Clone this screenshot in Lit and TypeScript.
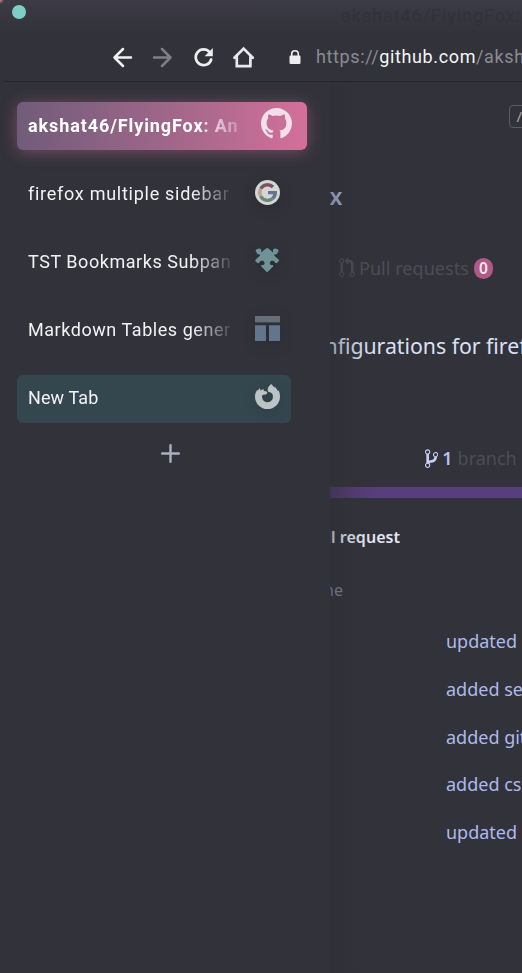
import { LitElement, html, css, svg } from "lit";
import { customElement, property } from "lit/decorators.js";
import { classMap } from "lit/directives/class-map.js";
import { styleMap } from "lit/directives/style-map.js";

const githubMark = svg`<svg viewBox="0 0 16 16" width="31" height="31"><path fill="#f3dfe9" d="M8 0C3.58 0 0 3.58 0 8c0 3.54 2.29 6.53 5.47 7.59.4.07.55-.17.55-.38 0-.19-.01-.82-.01-1.49-2.01.37-2.53-.49-2.69-.94-.09-.23-.48-.94-.82-1.13-.28-.15-.68-.52-.01-.53.63-.01 1.08.58 1.23.82.72 1.21 1.87.87 2.33.66.07-.52.28-.87.51-1.07-1.78-.2-3.64-.89-3.64-3.95 0-.87.31-1.59.82-2.15-.08-.2-.36-1.02.08-2.12 0 0 .67-.21 2.2.82.64-.18 1.32-.27 2-.27s1.36.09 2 .27c1.53-1.04 2.2-.82 2.2-.82.44 1.1.16 1.92.08 2.12.51.56.82 1.27.82 2.15 0 3.07-1.87 3.75-3.65 3.95.29.25.54.73.54 1.48 0 1.07-.01 1.93-.01 2.2 0 .21.15.46.55.38A8.01 8.01 0 0 0 16 8c0-4.42-3.58-8-8-8z"/></svg>`;

const googleMark = svg`<svg viewBox="0 0 25 25" width="25" height="25"><circle cx="12.5" cy="12.5" r="12.5" fill="#d3d5d7"/><g fill="none" stroke-width="3.4"><path stroke="#7a5558" d="M5.7 8.8A7.8 7.8 0 0 1 18 7"/><path stroke="#b9a886" d="M5.7 8.8a7.8 7.8 0 0 0 0 7.4"/><path stroke="#6b8576" d="M5.7 16.2a7.8 7.8 0 0 0 11.9 2.3"/><path stroke="#64748f" d="M17.6 18.5a7.8 7.8 0 0 0 2.7-5.9H13"/></g></svg>`;

const puzzle = svg`<svg viewBox="0 0 25 25" width="25" height="25"><path fill="#6f9396" d="M12.2 0C13.2 0 16.4 3 17.4 4C18.4 4.7 18.1 3.7 17.9 2.8C17.8.8 20.2 0 21.4 1.1C23.6.8 24.2 3.6 22.7 4.3C22.7 6.2 20.8 6.6 19.8 6.5C18.7 6.7 19 7.4 19.7 8L23.8 11.8Q24.2 12.6 23.6 13.4L21.8 15C20.9 15.5 20.3 15.1 19.7 14.1C18.6 12.2 16 12.2 15.1 13.9C14.2 15.6 15.2 17.1 17 17C18.4 17 18.6 18 17.9 18.8L12.8 23.7Q12.2 24.2 11.5 23.7L6.5 18.8C5.8 18 6.2 17 7.6 17C9.2 17.1 10.1 15.6 9.2 13.9C8.2 12.2 5.7 12.2 4.6 14.1C4.1 15.1 3.4 15.5 2.5 15L.7 13.4Q.1 12.6.5 11.8L4.6 8C5.3 7.4 5.5 6.7 4.4 6.5C3.4 6.6 1.6 6.2 1.6 4.3C0 3.6.7.8 2.9 1.1C4.1 0 6.4.8 6.4 2.8C6.2 3.7 5.9 4.7 6.9 4C7.9 3 11.2 0 12.2 0Z"/></svg>`;

const tableMark = svg`<svg viewBox="0 0 25 25" width="25" height="25"><path fill="#666e78" d="M0 0h25v6.4H0z"/><path fill="#62758c" d="M0 9.2h11V25H0zM14 9.2h11V25H14z"/></svg>`;

const foxMark = svg`<svg viewBox="0 0 25 25" width="25" height="25"><path fill="#bcc2c6" d="M16.2 0L19.2 3.2L20.1 3.1C21.1 4.4 22.1 5.3 22.6 6.8L23.7 6.6C24.5 8.6 25 10.4 25 12.7A12.5 12.3 0 0 1 0 12.7C0 9.8.8 7.8 2.2 6L2.9 6.6L4.8 3.9L5.6 6.5L8.3 5L9 7.1L11.8 7.4L12.4 9L10.8 10.4L8.2 10.7C7 11 6.8 12.2 7.1 13.4A5.4 5.2 0 0 0 17.9 12.7C18 10.8 17.3 9.6 16.2 8.8L13.3 7.8C11.6 5 13.8 2 16.2 0Z"/></svg>`;

@customElement("side-tab")
class SideTab extends LitElement {
  @property() label = "";
  @property({ type: Number }) spacing = 0.5;
  @property({ type: Boolean }) active = false;
  @property({ type: Boolean }) fresh = false;
  @property({ attribute: false }) icon: unknown = null;

  static styles = css`
    :host { display: block; }
    .tab {
      box-sizing: border-box; width: 274px; height: 48px; border-radius: 6px;
      padding: 0 11px 0 11px; display: flex; align-items: center; justify-content: space-between;
      color: #f2f2f4; font: 400 18px/24px Roboto, "Liberation Sans", sans-serif;
    }
    .label {
      width: 206px; overflow: hidden; white-space: nowrap;
      -webkit-mask-image: linear-gradient(90deg, #000 164px, transparent 208px);
      mask-image: linear-gradient(90deg, #000 164px, transparent 208px);
    }
    .icon { display: flex; margin-bottom: 3px; filter: drop-shadow(1px 3px 7px rgba(0, 0, 0, .16)); }
    .active {
      width: 290px; padding-right: 15px; color: #fff; font-weight: 700;
      background: linear-gradient(90deg, #705c79, #a2678a 55%, #d3709b);
      box-shadow: 0 2px 16px rgba(211, 112, 155, .42);
    }
    .active .label {
      width: 215px;
      -webkit-mask-image: linear-gradient(90deg, #000 170px, transparent 222px);
      mask-image: linear-gradient(90deg, #000 170px, transparent 222px);
    }
    .active .icon { margin-bottom: 5px; filter: none; }
    .fresh { background: #34474f; margin-top: 1px; padding-bottom: 2px; }
  `;

  render() {
    return html`<div class=${classMap({ tab: true, active: this.active, fresh: this.fresh })}>
      <span class="label" style=${styleMap({ letterSpacing: `${this.spacing}px` })}>${this.label}</span><span class="icon">${this.icon}</span>
    </div>`;
  }
}

@customElement("app-root")
class AppRoot extends LitElement {
  static styles = css`
    :host {
      display: flex; flex-direction: column; width: 522px; height: 973px; overflow: hidden;
      background: #32323a; font-family: "Noto Sans", sans-serif; white-space: nowrap;
    }
    .chrome {
      height: 82px; flex: none; box-sizing: border-box; display: flex; flex-direction: column;
      background: radial-gradient(circle at 0 0, #b5737d 0, #b5737d 1px, transparent 4px), linear-gradient(#3c3b46, #32323a 34px);
    }
    .titlebar { height: 32px; display: flex; align-items: flex-start; }
    .dot { width: 14px; height: 14px; border-radius: 50%; background: #7dcfc6; margin: 5px 0 0 12px; }
    .title { margin: 4px 0 0 315px; font: 18px/24px Roboto, sans-serif; letter-spacing: .95px; color: #31313a; }
    .nav { height: 49px; display: flex; align-items: center; margin-left: 4px; border-bottom: 1px solid #25252b; }
    .nav svg { display: block; flex: none; }
    .back { margin-left: 107px; }
    .forward { margin-left: 16px; opacity: .4; }
    .reload { margin-left: 17px; }
    .home { margin-left: 16px; }
    .lock { margin-left: 33px; }
    .url { margin-left: 15px; font: 18px/24px Roboto, sans-serif; letter-spacing: .62px; color: #8b8b91; }
    .url b { font-weight: 400; color: #f5f5f7; }
    .body { flex: 1; display: flex; min-height: 0; }
    .sidebar { width: 330px; flex: none; box-sizing: border-box; padding: 20px 0 0 17px; display: flex; flex-direction: column; overflow: hidden; }
    .tabs { display: flex; flex-direction: column; gap: 20px; }
    .plus { margin: 21px 0 0 144px; width: 19px; height: 19px; display: block; }
    .page { flex: 1; min-width: 0; overflow: hidden; position: relative; display: flex; flex-direction: column; }
    .page::after {
      content: ""; position: absolute; inset: 0 auto 0 0; width: 46px;
      background: linear-gradient(90deg, rgba(44, 44, 50, .36), rgba(46, 46, 52, .14) 45%, transparent);
    }
    .row { height: 30px; flex: none; display: flex; align-items: center; line-height: 30px; }
    .key { box-sizing: border-box; flex: none; width: 40px; height: 23px; margin: 23px 0 0 178.5px; border: 1px solid #5b5b62; border-radius: 4px; padding-left: 7px; font-size: 15px; line-height: 21px; color: #a5a5aa; }
    .cut { justify-content: flex-end; overflow: hidden; }
    .repo { margin-top: 53px; width: 12.5px; font-size: 23px; font-weight: 600; color: #b0bbe4; }
    .pulls { margin-top: 42px; padding-left: 8.5px; font-size: 18px; color: #4c4c58; }
    .pulls svg { margin-right: 4.5px; }
    .pulls span { letter-spacing: .05px; }
    .pulls .count { margin-left: 5px; width: 19px; height: 21px; border-radius: 10px; background: #b15885; color: #f4e8f2; font-size: 15.5px; font-weight: 600; line-height: 21px; text-align: center; }
    .about { margin-top: 48px; font-size: 21.3px; color: #d9e0f5; }
    .about span { margin-left: -5.5px; letter-spacing: -.03px; }
    .branch { margin-top: 82px; padding-left: 94.5px; font-size: 18px; color: #4c4c58; }
    .branch svg { margin-top: 2px; }
    .branch b { margin: 0 5px 0 4.5px; font-weight: 600; color: #b3c1f5; }
    .bar { height: 11px; flex: none; margin-top: 14px; background: linear-gradient(90deg, #4d3a68, #573e7c 34px); }
    .request { margin-top: 24px; width: 70px; font-size: 16px; font-weight: 600; color: #e4e8f6; }
    .request span { letter-spacing: .04px; }
    .name { margin-top: 23px; width: 13px; font-size: 16px; color: #8286a5; }
    .commits { margin: 21px 0 0 116px; display: flex; flex-direction: column; gap: 17.75px; font-size: 18px; color: #adb9ee; }
  `;

  private tabs = [
    { label: "akshat46/FlyingFox: An", icon: githubMark, spacing: 0.9, active: true, fresh: false },
    { label: "firefox multiple sidebar", icon: googleMark, spacing: 0.73, active: false, fresh: false },
    { label: "TST Bookmarks Subpan", icon: puzzle, spacing: 0.55, active: false, fresh: false },
    { label: "Markdown Tables gener", icon: tableMark, spacing: 0.55, active: false, fresh: false },
    { label: "New Tab", icon: foxMark, spacing: 0.1, active: false, fresh: true },
  ];

  private commits = ["updated", "added se", "added git", "added css", "updated"];

  render() {
    return html`
      <header class="chrome">
        <div class="titlebar"><span class="dot"></span><span class="title">akshat46/FlyingFox:</span></div>
        <nav class="nav">
          <svg class="back" width="24" height="24" viewBox="0 0 24 24" fill="none" stroke="#f1f1f3" stroke-width="2.5" stroke-linecap="round" stroke-linejoin="round"><path d="M20 12.5H4M12 4L3.5 12.5L12 21"/></svg>
          <svg class="forward" width="24" height="24" viewBox="0 0 24 24" fill="none" stroke="#f1f1f3" stroke-width="2.5" stroke-linecap="round" stroke-linejoin="round"><path d="M3 12.5H19M11 4L19.5 12.5L11 21"/></svg>
          <svg class="reload" width="24" height="24" viewBox="0 0 24 24"><path d="M17.7 7.2A7.9 7.9 0 1 0 19.2 14.5" fill="none" stroke="#ededf0" stroke-width="2.7" stroke-linecap="round"/><path d="M20.8 3v8.2h-8.2z" fill="#ededf0"/></svg>
          <svg class="home" width="24" height="24" viewBox="0 0 24 24" fill="none" stroke="#e9e9ed" stroke-width="2.7" stroke-linecap="round" stroke-linejoin="miter"><path d="M2.4 12.8L11.6 3.6L20.8 12.8M4.8 11.5V21.2H18.4V11.5"/></svg>
          <svg class="lock" width="12" height="16" viewBox="0 0 12 16"><path d="M2.7 8V5a3.3 3.3 0 0 1 6.6 0v3" fill="none" stroke="#ededf0" stroke-width="1.6"/><rect x=".5" y="6.5" width="11" height="8.5" rx="1.2" fill="#ededf0"/></svg>
          <span class="url">https://<b>github.com</b>/aksh</span>
        </nav>
      </header>
      <div class="body">
        <aside class="sidebar">
          <div class="tabs">
            ${this.tabs.map((t) => html`<side-tab .label=${t.label} .spacing=${t.spacing} .icon=${t.icon} .active=${t.active} .fresh=${t.fresh}></side-tab>`)}
          </div>
          <svg class="plus" viewBox="0 0 19 19" stroke="#abafc0" stroke-width="2.4" stroke-linecap="round"><path d="M9.5 1.2v16.6M1.2 9.5h16.6"/></svg>
        </aside>
        <main class="page">
          <div class="key">/</div>
          <div class="row cut repo">x</div>
          <div class="row pulls">
            <svg width="16" height="21.3" viewBox="0 0 12 16" fill="#4c4c58"><path d="M11 11.28V5c-.03-.78-.34-1.47-.94-2.06C9.46 2.35 8.78 2.03 8 2H7V0L4 3l3 3V4h1c.27.02.48.11.69.31.21.2.3.42.31.69v6.28A1.993 1.993 0 0 0 10 15a1.993 1.993 0 0 0 1-3.72zm-1 2.92c-.66 0-1.2-.55-1.2-1.2 0-.65.55-1.2 1.2-1.2.65 0 1.2.55 1.2 1.2 0 .65-.55 1.2-1.2 1.2zM4 3c0-1.11-.89-2-2-2a1.993 1.993 0 0 0-1 3.72v6.56A1.993 1.993 0 0 0 2 15a1.993 1.993 0 0 0 1-3.72V4.72c.59-.34 1-.98 1-1.72zm-.8 10c0 .66-.55 1.2-1.2 1.2-.65 0-1.2-.55-1.2-1.2 0-.65.55-1.2 1.2-1.2.65 0 1.2.55 1.2 1.2zM2 4.2C1.34 4.2.8 3.65.8 3c0-.65.55-1.2 1.2-1.2.65 0 1.2.55 1.2 1.2 0 .65-.55 1.2-1.2 1.2z"/></svg>
            <span>Pull requests</span><span class="count">0</span>
          </div>
          <div class="row about"><span>nfigurations for firef</span></div>
          <div class="row branch">
            <svg width="13.3" height="21.3" viewBox="0 0 10 16" fill="#c6d0f8"><path d="M10 5c0-1.11-.89-2-2-2a1.993 1.993 0 0 0-1 3.72v.3c-.02.52-.23.98-.63 1.38-.4.4-.86.61-1.38.63-.83.02-1.48.16-2 .45V4.72a1.993 1.993 0 0 0-1-3.72C.88 1 0 1.89 0 3a2 2 0 0 0 1 1.72v6.56c-.59.35-1 .99-1 1.72 0 1.11.89 2 2 2 1.11 0 2-.89 2-2 0-.53-.2-1-.53-1.36.09-.06.48-.41.59-.47.25-.11.56-.17.94-.17 1.05-.05 1.95-.45 2.75-1.25S8.95 7.77 9 6.73h-.02C9.59 6.37 10 5.73 10 5zM2 1.8c.66 0 1.2.55 1.2 1.2 0 .65-.55 1.2-1.2 1.2C1.35 4.2.8 3.65.8 3c0-.65.55-1.2 1.2-1.2zm0 12.41c-.66 0-1.2-.55-1.2-1.2 0-.65.55-1.2 1.2-1.2.65 0 1.2.55 1.2 1.2 0 .65-.55 1.2-1.2 1.2zm6-8c-.66 0-1.2-.55-1.2-1.2 0-.65.55-1.2 1.2-1.2.65 0 1.2.55 1.2 1.2 0 .65-.55 1.2-1.2 1.2z"/></svg>
            <b>1</b><span>branch</span>
          </div>
          <div class="bar"></div>
          <div class="row cut request"><span>ll request</span></div>
          <div class="row cut name">ne</div>
          <div class="commits">${this.commits.map((c) => html`<div class="row">${c}</div>`)}</div>
        </main>
      </div>`;
  }
}
